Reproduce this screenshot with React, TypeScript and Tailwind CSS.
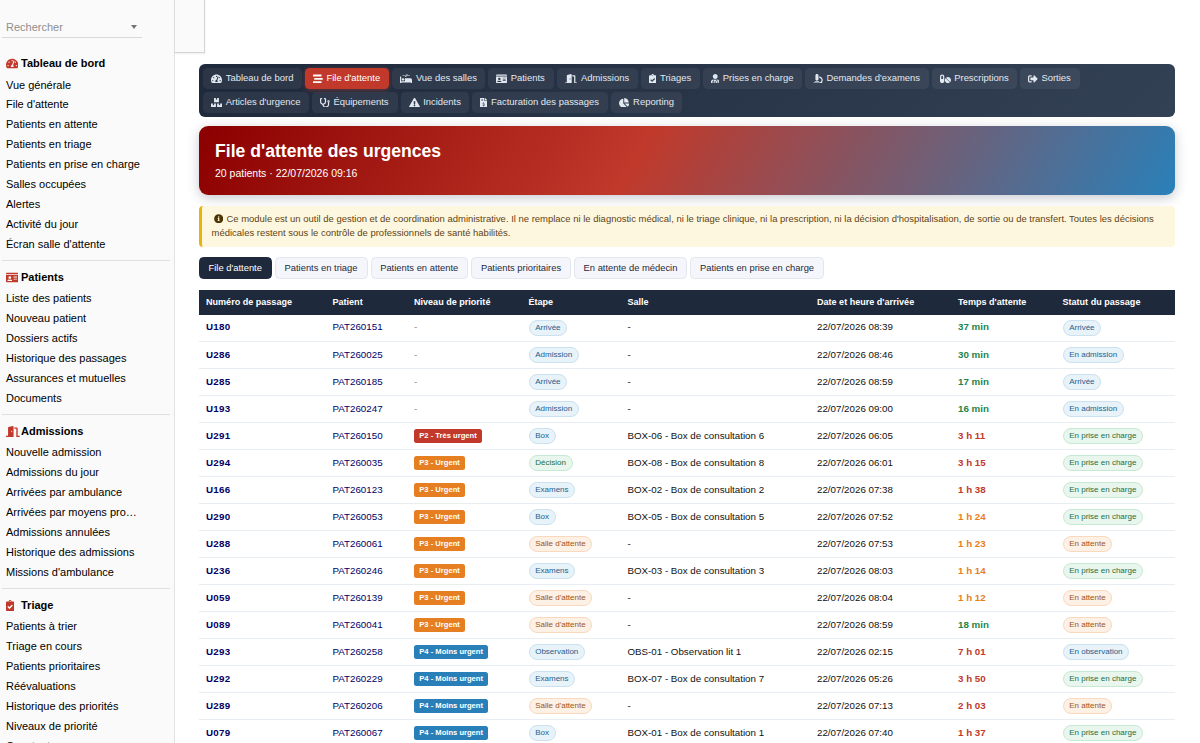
import { clsx } from 'clsx'
import type { IconType } from 'react-icons'
import {
    FaBoxes,
    FaChartPie,
    FaClipboardCheck,
    FaDoorOpen,
    FaExclamationTriangle,
    FaFileInvoiceDollar,
    FaIdCard,
    FaInfoCircle,
    FaMicroscope,
    FaPills,
    FaProcedures,
    FaSignOutAlt,
    FaStethoscope,
    FaStream,
    FaTachometerAlt,
    FaUserMd,
} from 'react-icons/fa'

type Tone = 'blue' | 'green' | 'orange'
type Wait = 'ok' | 'warn' | 'late'

type MenuSection = {
    title: string
    icon: IconType
    iconWidth: string
    items: string[]
}

type NavItem = {
    label: string
    icon: IconType
    iconWidth: string
    width: string
    active?: boolean
}

type Passage = {
    id: string
    patient: string
    priority: number
    step: string
    room: string
    arrival: string
    wait: string
    level: Wait
    status: string
}

const sections: MenuSection[] = [
    {
        title: 'Tableau de bord',
        icon: FaTachometerAlt,
        iconWidth: 'w-[12.4px]',
        items: ['Vue générale', "File d'attente", 'Patients en attente', 'Patients en triage', 'Patients en prise en charge', 'Salles occupées', 'Alertes', 'Activité du jour', "Écran salle d'attente"],
    },
    {
        title: 'Patients',
        icon: FaIdCard,
        iconWidth: 'w-[12.4px]',
        items: ['Liste des patients', 'Nouveau patient', 'Dossiers actifs', 'Historique des passages', 'Assurances et mutuelles', 'Documents'],
    },
    {
        title: 'Admissions',
        icon: FaDoorOpen,
        iconWidth: 'w-[13.75px]',
        items: ['Nouvelle admission', 'Admissions du jour', 'Arrivées par ambulance', 'Arrivées par moyens pro…', 'Admissions annulées', 'Historique des admissions', "Missions d'ambulance"],
    },
    {
        title: 'Triage',
        icon: FaClipboardCheck,
        iconWidth: 'w-[8.25px]',
        items: ['Patients à trier', 'Triage en cours', 'Patients prioritaires', 'Réévaluations', 'Historique des priorités', 'Niveaux de priorité', 'Constantes'],
    },
]

const navItems: NavItem[] = [
    { label: 'Tableau de bord', icon: FaTachometerAlt, iconWidth: 'w-[11px]', width: 'w-[99px]' },
    { label: "File d'attente", icon: FaStream, iconWidth: 'w-[9.75px]', width: 'w-[84px]', active: true },
    { label: 'Vue des salles', icon: FaProcedures, iconWidth: 'w-[12.2px]', width: 'w-[93px]' },
    { label: 'Patients', icon: FaIdCard, iconWidth: 'w-[11px]', width: 'w-[66px]' },
    { label: 'Admissions', icon: FaDoorOpen, iconWidth: 'w-[12.2px]', width: 'w-[81px]' },
    { label: 'Triages', icon: FaClipboardCheck, iconWidth: 'w-[7.3px]', width: 'w-[58.5px]' },
    { label: 'Prises en charge', icon: FaUserMd, iconWidth: 'w-[8.5px]', width: 'w-[99.5px]' },
    { label: "Demandes d'examens", icon: FaMicroscope, iconWidth: 'w-[9.75px]', width: 'w-[123.5px]' },
    { label: 'Prescriptions', icon: FaPills, iconWidth: 'w-[11px]', width: 'w-[85.5px]' },
    { label: 'Sorties', icon: FaSignOutAlt, iconWidth: 'w-[9.75px]', width: 'w-[60px]' },
    { label: "Articles d'urgence", icon: FaBoxes, iconWidth: 'w-[11px]', width: 'w-[106px]' },
    { label: 'Équipements', icon: FaStethoscope, iconWidth: 'w-[9.75px]', width: 'w-[85.5px]' },
    { label: 'Incidents', icon: FaExclamationTriangle, iconWidth: 'w-[11px]', width: 'w-[68.5px]' },
    { label: 'Facturation des passages', icon: FaFileInvoiceDollar, iconWidth: 'w-[7.3px]', width: 'w-[136px]' },
    { label: 'Reporting', icon: FaChartPie, iconWidth: 'w-[10.4px]', width: 'w-[71px]' },
]

const tabs = [
    { label: "File d'attente", width: 'w-[72.5px]' },
    { label: 'Patients en triage', width: 'w-[93px]' },
    { label: 'Patients en attente', width: 'w-[97.5px]' },
    { label: 'Patients prioritaires', width: 'w-[100px]' },
    { label: 'En attente de médecin', width: 'w-[113px]' },
    { label: 'Patients en prise en charge', width: 'w-[134px]' },
]

const columns = [
    { label: 'Numéro de passage', width: 'w-[126.5px]' },
    { label: 'Patient', width: 'w-[81.5px]' },
    { label: 'Niveau de priorité', width: 'w-[114.5px]' },
    { label: 'Étape', width: 'w-[99px]' },
    { label: 'Salle', width: 'w-[189.5px]' },
    { label: "Date et heure d'arrivée", width: 'w-[141px]' },
    { label: "Temps d'attente", width: 'w-[104.5px]' },
    { label: 'Statut du passage', width: 'w-[119.5px]' },
]

const passages: Passage[] = [
    { id: 'U180', patient: 'PAT260151', priority: 0, step: 'Arrivée', room: '-', arrival: '08:39', wait: '37 min', level: 'ok', status: 'Arrivée' },
    { id: 'U286', patient: 'PAT260025', priority: 0, step: 'Admission', room: '-', arrival: '08:46', wait: '30 min', level: 'ok', status: 'En admission' },
    { id: 'U285', patient: 'PAT260185', priority: 0, step: 'Arrivée', room: '-', arrival: '08:59', wait: '17 min', level: 'ok', status: 'Arrivée' },
    { id: 'U193', patient: 'PAT260247', priority: 0, step: 'Admission', room: '-', arrival: '09:00', wait: '16 min', level: 'ok', status: 'En admission' },
    { id: 'U291', patient: 'PAT260150', priority: 2, step: 'Box', room: 'BOX-06 - Box de consultation 6', arrival: '06:05', wait: '3 h 11', level: 'late', status: 'En prise en charge' },
    { id: 'U294', patient: 'PAT260035', priority: 3, step: 'Décision', room: 'BOX-08 - Box de consultation 8', arrival: '06:01', wait: '3 h 15', level: 'late', status: 'En prise en charge' },
    { id: 'U166', patient: 'PAT260123', priority: 3, step: 'Examens', room: 'BOX-02 - Box de consultation 2', arrival: '07:38', wait: '1 h 38', level: 'late', status: 'En prise en charge' },
    { id: 'U290', patient: 'PAT260053', priority: 3, step: 'Box', room: 'BOX-05 - Box de consultation 5', arrival: '07:52', wait: '1 h 24', level: 'warn', status: 'En prise en charge' },
    { id: 'U288', patient: 'PAT260061', priority: 3, step: "Salle d'attente", room: '-', arrival: '07:53', wait: '1 h 23', level: 'warn', status: 'En attente' },
    { id: 'U236', patient: 'PAT260246', priority: 3, step: 'Examens', room: 'BOX-03 - Box de consultation 3', arrival: '08:03', wait: '1 h 14', level: 'warn', status: 'En prise en charge' },
    { id: 'U059', patient: 'PAT260139', priority: 3, step: "Salle d'attente", room: '-', arrival: '08:04', wait: '1 h 12', level: 'warn', status: 'En attente' },
    { id: 'U089', patient: 'PAT260041', priority: 3, step: "Salle d'attente", room: '-', arrival: '08:59', wait: '18 min', level: 'ok', status: 'En attente' },
    { id: 'U293', patient: 'PAT260258', priority: 4, step: 'Observation', room: 'OBS-01 - Observation lit 1', arrival: '02:15', wait: '7 h 01', level: 'late', status: 'En observation' },
    { id: 'U292', patient: 'PAT260229', priority: 4, step: 'Examens', room: 'BOX-07 - Box de consultation 7', arrival: '05:26', wait: '3 h 50', level: 'late', status: 'En prise en charge' },
    { id: 'U289', patient: 'PAT260206', priority: 4, step: "Salle d'attente", room: '-', arrival: '07:13', wait: '2 h 03', level: 'late', status: 'En attente' },
    { id: 'U079', patient: 'PAT260067', priority: 4, step: 'Box', room: 'BOX-01 - Box de consultation 1', arrival: '07:40', wait: '1 h 37', level: 'late', status: 'En prise en charge' },
]

const tones: Record<string, Tone> = {
    'Décision': 'green',
    'En prise en charge': 'green',
    "Salle d'attente": 'orange',
    'En attente': 'orange',
}

const toneClasses: Record<Tone, string> = {
    blue: 'border-[#cbe1ef] bg-[#e8f2f9] text-[#1f618d]',
    green: 'border-[#c6e9d4] bg-[#e8f6ee] text-[#1d7044]',
    orange: 'border-[#f9d9bd] bg-[#fdf0e4] text-[#a0541a]',
}

const waitClasses: Record<Wait, string> = {
    ok: 'text-[#1e8449]',
    warn: 'text-[#e67e22]',
    late: 'text-[#c0392b]',
}

const priorities: Record<number, { label: string, color: string }> = {
    2: { label: 'P2 - Très urgent', color: 'bg-[#c0392b]' },
    3: { label: 'P3 - Urgent', color: 'bg-[#e67e22]' },
    4: { label: 'P4 - Moins urgent', color: 'bg-[#2980b9]' },
}

function Chip({ label }: { label: string }) {
    return (
        <span className={clsx('inline-flex h-4 items-center rounded-full border px-[5.7px] text-[8px] leading-none', toneClasses[tones[label] ?? 'blue'])}>
            {label}
        </span>
    )
}

function Priority({ level }: { level: number }) {
    if (!level) return <span className="text-[#8a8a8a]">-</span>

    return (
        <span className={clsx('inline-flex h-[13.5px] items-center rounded-[2.5px] px-[5.3px] text-[7.6px] leading-none font-bold text-white', priorities[level].color)}>
            {priorities[level].label}
        </span>
    )
}

function Sidebar() {
    return (
        <aside className="h-full w-[175px] shrink-0 border-r border-[#e2e2e2] bg-[#fafafa] text-[11px] text-black">
            <div className="ml-0.5 flex h-[38px] w-[140px] items-end justify-between border-b border-[#d9d9d9] pr-[5px] pb-[3px] pl-1 text-[#8e8e8e]">
                <span className="leading-[14px]">Rechercher</span>
                <span className="mb-[5px] border-x-[3px] border-t-4 border-x-transparent border-t-[#757575]" />
            </div>

            <nav className="pt-2">
                {sections.map(({ title, icon: Icon, iconWidth, items }, index) => (
                    <div
                        key={title}
                        className={clsx('mr-1 ml-0.5 border-t pt-[4.5px] pb-[4.9px] pl-1', index === 0 ? 'border-transparent' : 'border-[#e0e0e0]')}
                    >
                        <h2 className="flex h-6 items-center font-bold">
                            <span className="w-[15px]">
                                <Icon className={clsx('h-[11px] text-[#c0392b]', iconWidth)} />
                            </span>
                            {title}
                        </h2>
                        <ul>
                            {items.map(item => (
                                <li key={item} className="h-[19.94px] leading-[19.94px] whitespace-nowrap">{item}</li>
                            ))}
                        </ul>
                    </div>
                ))}
            </nav>
        </aside>
    )
}

function TopNav() {
    return (
        <nav className="flex h-[53px] flex-wrap content-start gap-[3px] rounded-md bg-linear-135 from-[#1e293b] to-[#334155] p-1 text-[9.45px] text-[#e2e8f0]">
            {navItems.map(({ label, icon: Icon, iconWidth, width, active }) => (
                <a
                    key={label}
                    className={clsx(
                        'flex h-[21px] items-center gap-[3.7px] rounded-[4.5px] pb-px pl-2 whitespace-nowrap',
                        width,
                        active ? 'bg-[#c0392b] text-white shadow-[0_1px_4px_rgba(192,57,43,0.5)]' : 'bg-white/6'
                    )}
                >
                    <Icon className={clsx('mt-px h-[9.75px] shrink-0', iconWidth)} />
                    {label}
                </a>
            ))}
        </nav>
    )
}

function QueueTable() {
    return (
        <table className="mt-[11px] w-full table-fixed border-collapse text-left text-[9.75px] text-[#111]">
            <thead>
                <tr className="h-[24.5px] bg-[#1e293b] text-[9.05px] text-white">
                    {columns.map(({ label, width }) => (
                        <th key={label} className={clsx('p-0 pt-px pl-[7px] font-bold whitespace-nowrap', width)}>{label}</th>
                    ))}
                </tr>
            </thead>
            <tbody>
                {passages.map(passage => (
                    <tr key={passage.id} className="h-[27px] border-b border-[#e8ecf3] *:py-0 *:pr-0 *:pl-[7px] *:whitespace-nowrap">
                        <td className="font-bold tracking-[0.3px] text-[#000066]">{passage.id}</td>
                        <td className="text-[#000066]">{passage.patient}</td>
                        <td>
                            <div className="flex items-center"><Priority level={passage.priority} /></div>
                        </td>
                        <td>
                            <div className="flex items-center"><Chip label={passage.step} /></div>
                        </td>
                        <td>{passage.room}</td>
                        <td>22/07/2026 {passage.arrival}</td>
                        <td className={clsx('font-bold', waitClasses[passage.level])}>{passage.wait}</td>
                        <td>
                            <div className="flex items-center"><Chip label={passage.status} /></div>
                        </td>
                    </tr>
                ))}
            </tbody>
        </table>
    )
}

function App() {
    return (
        <div className="flex h-[743px] w-[1200px] overflow-hidden bg-white font-['Liberation_Sans',Arial,sans-serif]">
            <Sidebar />

            <main className="min-w-0 flex-1">
                <div className="h-[53px] w-[30px] border-r border-b border-[#d4d4d4] bg-[#fafafa] shadow-[0_1px_2px_rgba(0,0,0,0.08)]" />

                <div className="mt-[11px] ml-6 w-[975.5px]">
                    <TopNav />

                    <header className="mt-[9px] h-[69px] rounded-[9px] bg-[linear-gradient(120deg,#8b0000_0%,#c0392b_45%,#2980b9_100%)] px-4 pt-[15px] text-white shadow-[0_3px_12px_rgba(30,41,59,0.25)]">
                        <h1 className="text-[17.6px] leading-5 font-bold">File d'attente des urgences</h1>
                        <p className="mt-[5px] text-[10.5px] leading-[14px]">20 patients · 22/07/2026 09:16</p>
                    </header>

                    <p className="mt-[11px] h-[41px] rounded-[4px] border-l-[3px] border-[#eab308] bg-[#fef7e0] pt-[6px] pl-[9.5px] text-[9.47px] leading-[13.5px] whitespace-nowrap text-[#5f4310]">
                        <FaInfoCircle className="mr-[3px] mb-[2px] ml-[2.5px] inline size-[9.4px] text-[#4d3500]" />
                        Ce module est un outil de gestion et de coordination administrative. Il ne remplace ni le diagnostic médical, ni le triage clinique, ni la prescription, ni la décision d'hospitalisation, de sortie ou de transfert. Toutes les décisions
                        <br />
                        médicales restent sous le contrôle de professionnels de santé habilités.
                    </p>

                    <div className="mt-[10px] flex gap-[3px] text-[9.4px] text-[#1e293b]">
                        {tabs.map(({ label, width }, index) => (
                            <button
                                key={label}
                                className={clsx(
                                    'h-[22px] rounded-[4.5px] border whitespace-nowrap',
                                    width,
                                    index === 0 ? 'border-[#1e293b] bg-[#1e293b] text-white' : 'border-[#e2e6ef] bg-[#f4f6fb]'
                                )}
                            >
                                {label}
                            </button>
                        ))}
                    </div>

                    <QueueTable />
                </div>
            </main>
        </div>
    )
}

export default App
